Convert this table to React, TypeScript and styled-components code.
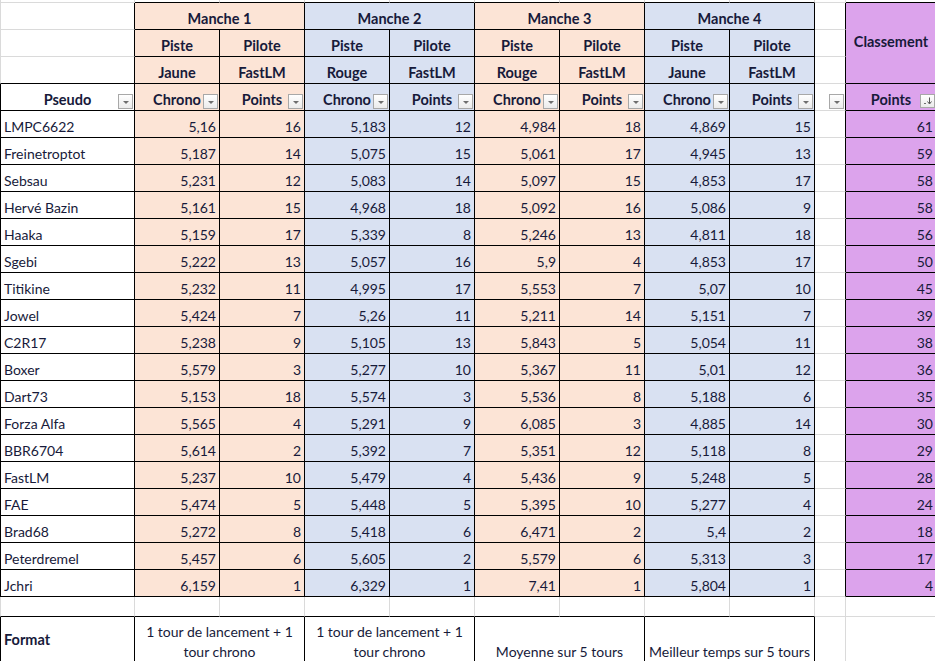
import styled, { createGlobalStyle } from 'styled-components'

const GRID = '#dadada'
const INK = '#000'
const TEXT = '#171a3a'
const PEACH = '#fce4d6'
const BLUE = '#d9e1f2'
const PURPLE = '#dca3ec'

type Edge = 'k' | 'g'

const line = (e: Edge) => `1px solid ${e === 'k' ? INK : GRID}`

const GlobalStyle = createGlobalStyle`
  html, body {
    margin: 0;
    padding: 0;
    background: #fff;
    overflow: hidden;
  }
  body {
    font-family: Lato, 'Liberation Sans', sans-serif;
    color: ${TEXT};
  }
`

const Sheet = styled.div`
  display: grid;
  grid-template-columns: 135px repeat(8, 85px) 31px 91px;
  grid-template-rows: 3px repeat(22, 27px) 20px 49px;
  width: 937px;
  font-size: 14px;
`

type CellProps = {
  $bg?: string
  $r: Edge
  $b: Edge
  $l?: Edge
  $cols?: number
  $rows?: number
  $align?: 'left' | 'right' | 'center'
  $middle?: boolean
  $bold?: boolean
  $wrap?: boolean
}

const Cell = styled.div<CellProps>`
  position: relative;
  box-sizing: border-box;
  display: flex;
  align-items: ${({ $middle }) => ($middle ? 'center' : 'flex-end')};
  justify-content: ${({ $align }) =>
    $align === 'left' ? 'flex-start' : $align === 'right' ? 'flex-end' : 'center'};
  text-align: ${({ $align }) => $align ?? 'center'};
  grid-column: span ${({ $cols }) => $cols ?? 1};
  grid-row: span ${({ $rows }) => $rows ?? 1};
  background: ${({ $bg }) => $bg ?? '#fff'};
  border-right: ${({ $r }) => line($r)};
  border-bottom: ${({ $b }) => line($b)};
  border-left: ${({ $l }) => ($l ? line($l) : 'none')};
  padding: 0 3px ${({ $wrap }) => ($wrap ? '3px' : '2px')} 3px;
  line-height: ${({ $wrap }) => ($wrap ? '20px' : '16px')};
  font-size: ${({ $bold }) => ($bold ? '14.5px' : '14px')};
  font-weight: ${({ $bold }) => ($bold ? 700 : 400)};
  white-space: ${({ $wrap }) => ($wrap ? 'normal' : 'nowrap')};
  overflow: hidden;
`

const FilterButton = styled.span`
  position: absolute;
  right: 1px;
  bottom: 1px;
  width: 15px;
  height: 15px;
  box-sizing: border-box;
  border: 1px solid #a8a8a8;
  background: linear-gradient(#ffffff, #ebebeb);

  &::after {
    content: '';
    position: absolute;
    left: 4px;
    top: 6px;
    border-left: 3px solid transparent;
    border-right: 3px solid transparent;
    border-top: 3px solid #6e6e6e;
  }
`

const SortButton = styled.span`
  position: absolute;
  right: 1px;
  bottom: 2px;
  width: 15px;
  height: 14px;
  box-sizing: border-box;
  border: 1px solid #a8a8a8;
  background: linear-gradient(#ffffff, #ebebeb);
  display: flex;
  align-items: center;
  justify-content: center;
`

type Manche = { title: string; piste: string; pilote: string; bg: string }

const manches: Manche[] = [
  { title: 'Manche 1', piste: 'Jaune', pilote: 'FastLM', bg: PEACH },
  { title: 'Manche 2', piste: 'Rouge', pilote: 'FastLM', bg: BLUE },
  { title: 'Manche 3', piste: 'Rouge', pilote: 'FastLM', bg: PEACH },
  { title: 'Manche 4', piste: 'Jaune', pilote: 'FastLM', bg: BLUE },
]

type Racer = { name: string; runs: [string, number][]; total: number }

const racers: Racer[] = [
  { name: 'LMPC6622', runs: [['5,16', 16], ['5,183', 12], ['4,984', 18], ['4,869', 15]], total: 61 },
  { name: 'Freinetroptot', runs: [['5,187', 14], ['5,075', 15], ['5,061', 17], ['4,945', 13]], total: 59 },
  { name: 'Sebsau', runs: [['5,231', 12], ['5,083', 14], ['5,097', 15], ['4,853', 17]], total: 58 },
  { name: 'Hervé Bazin', runs: [['5,161', 15], ['4,968', 18], ['5,092', 16], ['5,086', 9]], total: 58 },
  { name: 'Haaka', runs: [['5,159', 17], ['5,339', 8], ['5,246', 13], ['4,811', 18]], total: 56 },
  { name: 'Sgebi', runs: [['5,222', 13], ['5,057', 16], ['5,9', 4], ['4,853', 17]], total: 50 },
  { name: 'Titikine', runs: [['5,232', 11], ['4,995', 17], ['5,553', 7], ['5,07', 10]], total: 45 },
  { name: 'Jowel', runs: [['5,424', 7], ['5,26', 11], ['5,211', 14], ['5,151', 7]], total: 39 },
  { name: 'C2R17', runs: [['5,238', 9], ['5,105', 13], ['5,843', 5], ['5,054', 11]], total: 38 },
  { name: 'Boxer', runs: [['5,579', 3], ['5,277', 10], ['5,367', 11], ['5,01', 12]], total: 36 },
  { name: 'Dart73', runs: [['5,153', 18], ['5,574', 3], ['5,536', 8], ['5,188', 6]], total: 35 },
  { name: 'Forza Alfa', runs: [['5,565', 4], ['5,291', 9], ['6,085', 3], ['4,885', 14]], total: 30 },
  { name: 'BBR6704', runs: [['5,614', 2], ['5,392', 7], ['5,351', 12], ['5,118', 8]], total: 29 },
  { name: 'FastLM', runs: [['5,237', 10], ['5,479', 4], ['5,436', 9], ['5,248', 5]], total: 28 },
  { name: 'FAE', runs: [['5,474', 5], ['5,448', 5], ['5,395', 10], ['5,277', 4]], total: 24 },
  { name: 'Brad68', runs: [['5,272', 8], ['5,418', 6], ['6,471', 2], ['5,4', 2]], total: 18 },
  { name: 'Peterdremel', runs: [['5,457', 6], ['5,605', 2], ['5,579', 6], ['5,313', 3]], total: 17 },
  { name: 'Jchri', runs: [['6,159', 1], ['6,329', 1], ['7,41', 1], ['5,804', 1]], total: 4 },
]

const formats = [
  '1 tour de lancement + 1 tour chrono',
  '1 tour de lancement + 1 tour chrono',
  'Moyenne sur 5 tours',
  'Meilleur temps sur 5 tours',
]

function SortIcon() {
  return (
    <svg width="9" height="8" viewBox="0 0 9 8">
      <path d="M1 6.5h2" stroke="#6e6e6e" strokeWidth="1" />
      <path d="M6.5 0.5v6" stroke="#555" strokeWidth="1" />
      <path d="M4.5 4.5l2 2.5 2-2.5" fill="none" stroke="#555" strokeWidth="1" />
    </svg>
  )
}

function App() {
  return (
    <>
      <GlobalStyle />
      <Sheet>
        {/* sliver of the row above the table */}
        <Cell $l="g" $r="g" $b="g" />
        {Array.from({ length: 8 }, (_, i) => (
          <Cell key={`top-${i}`} $r="g" $b="k" />
        ))}
        <Cell $r="g" $b="g" />
        <Cell $r="g" $b="k" />

        {/* Manche titles */}
        <Cell $l="g" $r="k" $b="g" />
        {manches.map((m) => (
          <Cell key={m.title} $cols={2} $bg={m.bg} $r="k" $b="k" $bold>
            {m.title}
          </Cell>
        ))}
        <Cell $r="k" $b="g" />
        <Cell $rows={3} $bg={PURPLE} $r="k" $b="k" $bold $middle>
          Classement
        </Cell>

        {/* Piste / Pilote */}
        <Cell $l="g" $r="k" $b="g" />
        {manches.map((m) => [
          <Cell key={`${m.title}-p`} $bg={m.bg} $r="k" $b="k" $bold>
            Piste
          </Cell>,
          <Cell key={`${m.title}-q`} $bg={m.bg} $r="k" $b="k" $bold>
            Pilote
          </Cell>,
        ])}
        <Cell $r="k" $b="g" />

        {/* track colour / driver */}
        <Cell $l="g" $r="k" $b="k" />
        {manches.map((m) => [
          <Cell key={`${m.title}-c`} $bg={m.bg} $r="k" $b="k" $bold>
            {m.piste}
          </Cell>,
          <Cell key={`${m.title}-d`} $bg={m.bg} $r="k" $b="k" $bold>
            {m.pilote}
          </Cell>,
        ])}
        <Cell $r="k" $b="g" />

        {/* column headers */}
        <Cell $l="k" $r="k" $b="k" $bold>
          Pseudo
          <FilterButton />
        </Cell>
        {manches.map((m) => [
          <Cell key={`${m.title}-h1`} $bg={m.bg} $r="k" $b="k" $bold>
            Chrono
            <FilterButton />
          </Cell>,
          <Cell key={`${m.title}-h2`} $bg={m.bg} $r="k" $b="k" $bold>
            Points
            <FilterButton />
          </Cell>,
        ])}
        <Cell $r="k" $b="g">
          <FilterButton />
        </Cell>
        <Cell $bg={PURPLE} $r="k" $b="k" $bold>
          Points
          <SortButton>
            <SortIcon />
          </SortButton>
        </Cell>

        {racers.map((r) => [
          <Cell key={`${r.name}-n`} $l="k" $r="k" $b="k" $align="left">
            {r.name}
          </Cell>,
          ...r.runs.map(([chrono, pts], i) => [
            <Cell key={`${r.name}-c${i}`} $bg={manches[i].bg} $r="k" $b="k" $align="right">
              {chrono}
            </Cell>,
            <Cell key={`${r.name}-p${i}`} $bg={manches[i].bg} $r="k" $b="k" $align="right">
              {pts}
            </Cell>,
          ]),
          <Cell key={`${r.name}-gap`} $r="k" $b="g" />,
          <Cell key={`${r.name}-t`} $bg={PURPLE} $r="k" $b="k" $align="right">
            {r.total}
          </Cell>,
        ])}

        {/* blank spacer row */}
        <Cell $l="g" $r="g" $b="k" />
        {Array.from({ length: 8 }, (_, i) => (
          <Cell key={`blank-${i}`} $r="g" $b="k" />
        ))}
        <Cell $r="g" $b="g" />
        <Cell $r="g" $b="g" />

        {/* format row */}
        <Cell $l="k" $r="k" $b="k" $bold $align="left" $middle>
          Format
        </Cell>
        {formats.map((f, i) => (
          <Cell key={`fmt-${i}`} $cols={2} $r="k" $b="k" $wrap>
            {f}
          </Cell>
        ))}
        <Cell $r="g" $b="g" />
        <Cell $r="g" $b="g" />
      </Sheet>
    </>
  )
}

export default App
